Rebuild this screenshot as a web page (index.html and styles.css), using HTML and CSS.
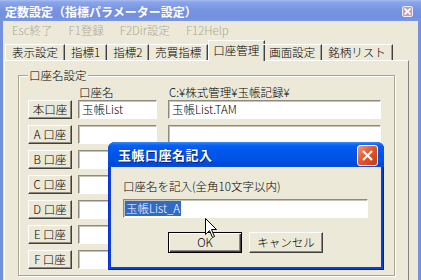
FILE: index.html
```html
<!DOCTYPE html>
<html>
    <head>
        <title>定数設定</title>
        <link rel="stylesheet" href="styles.css">
    </head>
    <body>
        <div class="window">
            <div class="titlebar">
                <span class="title">定数設定（指標パラメーター設定）</span>
                <span class="close_small">
                    <svg width="7" height="7" viewBox="0 0 7 7"><path d="M0.5 0.5L6.5 6.5M6.5 0.5L0.5 6.5" stroke="#fff" stroke-width="1.6"/></svg>
                </span>
            </div>
            <div class="frame">
                <div class="menubar">
                    <span>Esc終了</span>
                    <span>F1登録</span>
                    <span>F2Dir設定</span>
                    <span>F12Help</span>
                </div>
                <div class="tabs">
                    <div class="tab tab_first">表示設定</div>
                    <div class="tab">指標1</div>
                    <div class="tab">指標2</div>
                    <div class="tab">売買指標</div>
                    <div class="tab tab_on">口座管理</div>
                    <div class="tab">画面設定</div>
                    <div class="tab">銘柄リスト</div>
                </div>
                <div class="panel">
                    <fieldset class="group">
                        <legend>口座名設定</legend>
                        <div class="heads">
                            <span class="head_name">口座名</span>
                            <span class="head_path">C:¥株式管理¥玉帳記録¥</span>
                        </div>
                        <div class="rows">
                            <button class="btn">本口座</button><div class="field">玉帳List</div><div class="field field_path">玉帳List.TAM</div>
                            <button class="btn">A 口座</button><div class="field"></div><div class="field field_path"></div>
                            <button class="btn">B 口座</button><div class="field"></div><div class="field field_path"></div>
                            <button class="btn">C 口座</button><div class="field"></div><div class="field field_path"></div>
                            <button class="btn">D 口座</button><div class="field"></div><div class="field field_path"></div>
                            <button class="btn">E 口座</button><div class="field"></div><div class="field field_path"></div>
                            <button class="btn">F 口座</button><div class="field"></div><div class="field field_path"></div>
                        </div>
                    </fieldset>
                </div>
            </div>

            <!-- ダイアログ -->
            <div class="dialog">
                <div class="dlg_title">
                    <span>玉帳口座名記入</span>
                    <span class="dlg_close">
                        <svg width="11" height="11" viewBox="0 0 11 11"><path d="M1 1L10 10M10 1L1 10" stroke="#fff" stroke-width="2.2"/></svg>
                    </span>
                </div>
                <div class="dlg_body">
                    <div class="dlg_label">口座名を記入(全角10文字以内)</div>
                    <div class="dlg_input"><span class="sel">玉帳List_A</span></div>
                    <div class="dlg_buttons">
                        <button class="btn dlg_btn btn_default">OK</button>
                        <button class="btn dlg_btn">キャンセル</button>
                    </div>
                </div>
            </div>

            <svg class="cursor" width="13" height="21" viewBox="0 0 13 21">
                <path d="M0.5 0.5L0.5 16.5L4.5 12.5L7.5 19.5L9.5 18.5L6.5 11.5L11.5 11.5Z" fill="#fff" stroke="#000" stroke-width="1"/>
            </svg>
        </div>
    </body>
</html>
```

FILE: styles.css
```css
body{
    margin: 0;
    font-family: "Noto Sans CJK JP", sans-serif;
    font-size: 11.5px;
    font-weight: 300;
    color: #000;
}
.window{
    width: 421px;
    height: 280px;
    position: relative;
    overflow: hidden;
    display: flex;
    flex-direction: column;
    background-color: #ece9d8;
}
.titlebar{
    height: 21px;
    flex: none;
    display: flex;
    align-items: center;
    justify-content: space-between;
    padding: 2px 8px 0 5px;
    box-sizing: border-box;
    background: linear-gradient(#a9bdf0 0, #8aa5ea 2px, #7794e1 45%, #7390df 80%, #7b96e2 100%);
    color: #fff;
    font-size: 12px;
    font-weight: bold;
    line-height: 14px;
}
.close_small{
    width: 11px;
    height: 11px;
    box-sizing: border-box;
    border: 1px solid #e8ecf8;
    border-radius: 2px;
    background-color: #c99fb8;
    display: flex;
    align-items: center;
    justify-content: center;
}
.frame{
    flex: 1;
    min-height: 0;
    display: flex;
    flex-direction: column;
    border-left: 3px solid #7491e0;
    border-right: 3px solid #7491e0;
}
.menubar{
    height: 19px;
    flex: none;
    display: flex;
    align-items: center;
    gap: 16px;
    padding-left: 9px;
    color: #aca899;
    line-height: 13px;
}
.tabs{
    height: 20px;
    flex: none;
    display: flex;
    align-items: flex-end;
    padding-left: 2px;
    position: relative;
    z-index: 1;
}
.tab{
    height: 16px;
    box-sizing: border-box;
    padding: 0 6px;
    line-height: 14px;
    border-top: 1px solid #fff;
    border-right: 1px solid #404040;
    box-shadow: inset -1px 0 #a0a0a0;
}
.tab_first{
    border-left: 1px solid #fff;
}
.tab_on{
    height: 21px;
    margin: 0 -2px -1px 0;
    padding: 0 5px 0 4px;
    line-height: 19px;
    border-left: 1px solid #fff;
    background-color: #ece9d8;
}
.panel{
    flex: 1;
    margin: 0 9px 0 1px;
    border-top: 1px solid #fff;
    border-left: 1px solid #fff;
    border-right: 1px solid #808080;
}
.group{
    margin: 8px 0 0 13px;
    width: 377px;
    height: 207px;
    box-sizing: border-box;
    padding: 0 0 0 9px;
    border: 1px solid #a8a595;
    box-shadow: inset 1px 1px #fff, 1px 1px #fff;
}
.group legend{
    padding: 0 1px;
    line-height: 13px;
    background-color: #ece9d8;
}
.heads{
    display: flex;
    margin: 4px 0 1px 0;
    line-height: 13px;
}
.head_name{
    margin-left: 51px;
    width: 90px;
}
.rows{
    display: grid;
    grid-template-columns: 44px 79px 218px;
    grid-auto-rows: 19px;
    column-gap: 6px;
    row-gap: 6px;
}
.btn{
    font: inherit;
    color: #000;
    height: 19px;
    padding: 0;
    background-color: #ece9d8;
    border: 1px solid;
    border-color: #fff #404040 #404040 #fff;
    box-shadow: inset -1px -1px #8e8b7e;
    line-height: 15px;
}
.field{
    height: 19px;
    box-sizing: border-box;
    background-color: #fff;
    border: 1px solid;
    border-color: #8e8b7e #fff #fff #8e8b7e;
    box-shadow: inset 1px 1px #c6c3b6;
    padding-left: 3px;
    line-height: 17px;
}
.field_path{
    margin-left: 5px;
}
.dialog{
    position: absolute;
    left: 108px;
    top: 142px;
    width: 276px;
    height: 128px;
    box-sizing: border-box;
    display: flex;
    flex-direction: column;
    padding: 0 3px 3px;
    border-radius: 7px 7px 0 0;
    background: #0a3fd8;
    box-shadow: inset 1px 0 #0831d9, inset -1px -1px #001ea0;
    z-index: 2;
}
.dlg_title{
    height: 25px;
    flex: none;
    margin: 0 -3px;
    padding: 0 6px 0 10px;
    display: flex;
    align-items: center;
    justify-content: space-between;
    border-radius: 7px 7px 0 0;
    background: linear-gradient(#3d8ef7 0, #0a62f2 3px, #0058ee 30%, #0052e2 70%, #0049d8 90%, #0a4fd6 100%);
    color: #fff;
    font-size: 13px;
    font-weight: bold;
    letter-spacing: 0.5px;
    text-shadow: 1px 1px #0a1f80;
}
.dlg_close{
    width: 21px;
    height: 21px;
    margin-top: 1px;
    box-sizing: border-box;
    border: 1px solid #fff;
    border-radius: 3px;
    background: linear-gradient(135deg, #f09a78, #e05a30 45%, #c13c12);
    display: flex;
    align-items: center;
    justify-content: center;
}
.dlg_body{
    flex: 1;
    background-color: #ece9d8;
    padding: 13px 0 0 12px;
}
.dlg_label{
    line-height: 13px;
}
.dlg_input{
    width: 245px;
    height: 19px;
    margin-top: 6px;
    box-sizing: border-box;
    background-color: #fff;
    border: 1px solid;
    border-color: #8e8b7e #fff #fff #8e8b7e;
    box-shadow: inset 1px 1px #c6c3b6;
    padding: 1px 0 0 1px;
    line-height: 15px;
}
.sel{
    display: inline-block;
    padding: 0 1px;
    background-color: #316ac5;
    color: #fff;
}
.dlg_buttons{
    display: flex;
    gap: 7px;
    margin-top: 14px;
    padding-left: 45px;
}
.dlg_btn{
    width: 74px;
    height: 21px;
    line-height: 17px;
}
.btn_default{
    border-color: #000;
    box-shadow: inset 1px 1px #fff, inset -1px -1px #404040, inset -2px -2px #8e8b7e;
}
.cursor{
    position: absolute;
    left: 205px;
    top: 218px;
    z-index: 3;
}
```
